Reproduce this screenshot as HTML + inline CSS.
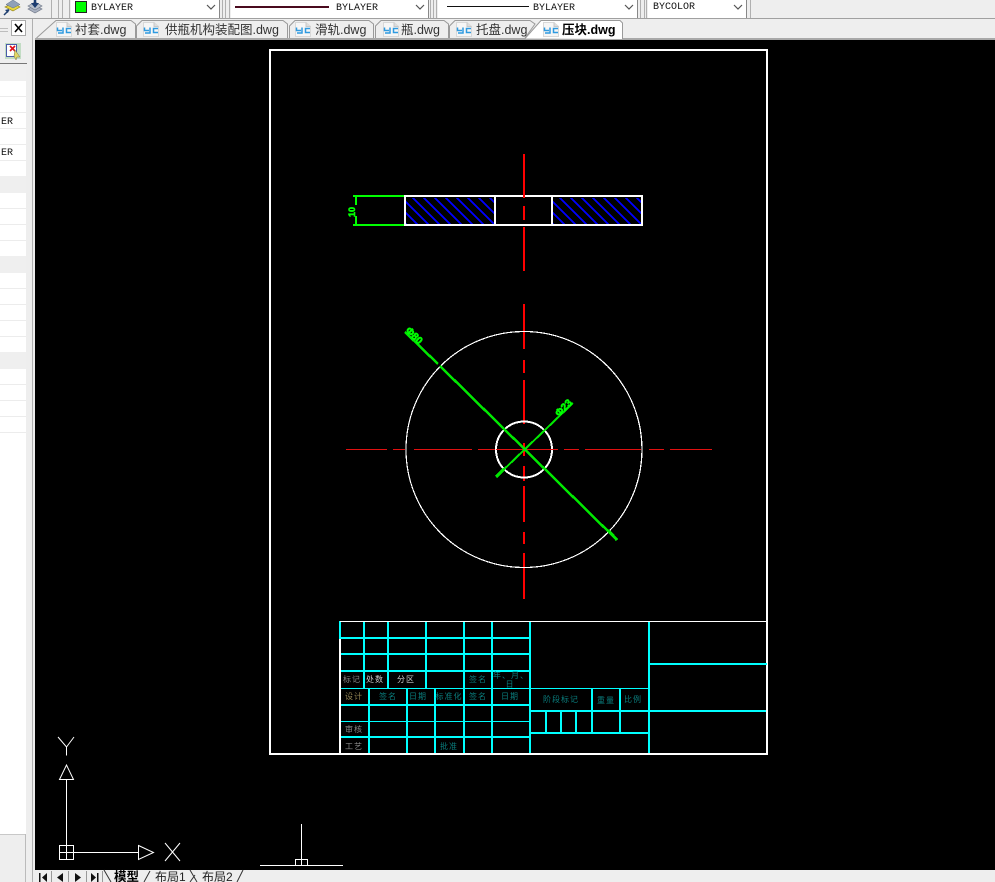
<!DOCTYPE html>
<html><head><meta charset="utf-8"><style>
html,body{margin:0;padding:0;width:995px;height:882px;overflow:hidden;background:#000}
svg{display:block;position:absolute;left:0;top:0}
.m{font-family:"Liberation Mono",monospace;font-size:10px;fill:#111}
.t{font-family:"Liberation Sans","WenQuanYi Zen Hei","Noto Sans CJK SC",sans-serif;font-size:12.5px;fill:#333}
.c{font-family:"Liberation Sans","Noto Sans CJK SC",sans-serif;font-size:8px;fill:#0a7d7d;text-anchor:middle;letter-spacing:1px}
</style></head><body>
<svg width="995" height="882" viewBox="0 0 995 882" xmlns="http://www.w3.org/2000/svg">
<defs>
<clipPath id="h1"><rect x="406" y="198" width="88" height="26"/></clipPath>
<clipPath id="h2"><rect x="553" y="198" width="88" height="26"/></clipPath>
<g id="yc"><path d="M0.500 1.500H11L15.500 5.500V15.500H0.500Z" fill="#f6f6f6" stroke="#d8d8d8"/><path d="M11 1.500V5.500H15.500" fill="#ddd" stroke="#c8c8c8"/><path d="M1.500 6.500V9.500H6M7 6.500V12H2M15 7.500H10.500V11.500H15" fill="none" stroke="#2f9ae0" stroke-width="1.500"/></g>
</defs>
<rect width="995" height="882" fill="#000"/>
<!-- toolbar -->
<rect x="0" y="0" width="995" height="40" fill="#eeeeee"/>
<rect x="0" y="18" width="995" height="1" fill="#a0a0a0"/>
<rect x="0" y="38" width="995" height="2" fill="#a8a8a8"/>
<!-- layer icons -->
<path d="M5 7L13 3L20 7L13 11Z" fill="#e7d640" stroke="#9a8a20" stroke-width=".7"/><path d="M6 4.500L13 0L20 4.500L13 8Z" fill="#8fa0b8" stroke="#607088" stroke-width=".5"/><path d="M4 15L9 10" stroke="#204070" stroke-width="1.500"/><path d="M9 9L5 10L8 13Z" fill="#204070"/>
<path d="M28 9L35 5L42 9L35 13Z" fill="#a8b0c0" stroke="#707888" stroke-width=".7"/><path d="M28 6L35 2L42 6L35 10Z" fill="#b8c0cc" stroke="#707888" stroke-width=".7"/><path d="M35 0V6" stroke="#1c3c70" stroke-width="2.500"/><path d="M31 3H39L35 8Z" fill="#1c3c70"/>
<g fill="none" stroke="#b0b0b0"><path d="M51.500 0V18M58.500 0V18M62.500 0V18M69.500 0V18"/><path d="M222.500 0V18M225.500 0V18M229.500 0V18"/><path d="M430.500 0V18M433.500 0V18M436.500 0V18"/><path d="M640.500 0V18M644.500 0V18M646.500 0V18"/><path d="M750.500 0V18"/></g>
<g shape-rendering="crispEdges">
<rect x="71" y="0" width="148" height="18" fill="#fff"/><rect x="219" y="0" width="1" height="18" fill="#888"/>
<rect x="231" y="0" width="197" height="18" fill="#fff"/><rect x="428" y="0" width="1" height="18" fill="#888"/>
<rect x="438" y="0" width="199" height="18" fill="#fff"/><rect x="637" y="0" width="1" height="18" fill="#888"/>
<rect x="648" y="0" width="98" height="18" fill="#fff"/><rect x="746" y="0" width="1" height="18" fill="#888"/>
<rect x="75.500" y="1.500" width="11" height="11" fill="#00ff00" stroke="#222" stroke-width="1"/>
<rect x="235" y="6" width="94" height="2" fill="#4a0a1e"/>
<rect x="447" y="6" width="82" height="1" fill="#111"/>
</g>
<text class="m" x="91" y="10">BYLAYER</text><text class="m" x="336" y="10">BYLAYER</text><text class="m" x="533" y="10">BYLAYER</text><text class="m" x="653" y="9">BYCOLOR</text>
<g fill="none" stroke="#555" stroke-width="1.200"><path d="M207 5L211 9L215 5M416 5L420 9L424 5M625 5L629 9L633 5M734 5L738 9L742 5"/></g>
<!-- tabs -->
<g fill="#eeeeee" stroke="#9a9a9a">
<path d="M36.500 38L56 20.500H131L135.500 24V38"/>
<path d="M136.500 38V26L142 20.500H283L287.500 24V38"/>
<path d="M289.500 38V26L295 20.500H369L373.500 24V38"/>
<path d="M375.500 38V26L381 20.500H444L448.500 24V38"/>
<path d="M449.500 38V26L455 20.500H530L535 24L525 38"/>
</g>
<path d="M525 38.500L541 20.500H620L622.500 23V39" fill="#fff" stroke="#9a9a9a"/>
<use href="#yc" x="56" y="21"/><use href="#yc" x="143" y="21"/><use href="#yc" x="295" y="21"/><use href="#yc" x="383" y="21"/><use href="#yc" x="456" y="21"/><use href="#yc" x="543" y="21"/>
<text class="t" x="75" y="34">衬套.dwg</text><text class="t" x="165" y="34">供瓶机构装配图.dwg</text><text class="t" x="315" y="34">滑轨.dwg</text><text class="t" x="401" y="34">瓶.dwg</text><text class="t" x="476" y="34">托盘.dwg</text><text class="t" x="562" y="34" style="font-weight:bold;fill:#000">压块.dwg</text>
<!-- left panel -->
<rect x="0" y="19" width="35" height="863" fill="#eeeeee"/>
<rect x="32" y="19" width="1" height="863" fill="#b0b0b0"/>
<rect x="0" y="64" width="26" height="770" fill="#fff"/>
<rect x="0" y="834" width="26" height="48" fill="#eeeeee"/>
<rect x="0" y="834" width="25" height="1" fill="#c8c8c8"/><rect x="25" y="834" width="1" height="48" fill="#bbb"/>
<rect x="0" y="63" width="27" height="1" fill="#777"/>
<rect x="0" y="28" width="8" height="1" fill="#bdbdbd"/><rect x="0" y="31" width="8" height="1" fill="#bdbdbd"/>
<rect x="11.500" y="20.500" width="14" height="15" fill="#fff" stroke="#aaa"/>
<path d="M15 24L22 32M22 24L15 32" stroke="#000" stroke-width="1.600"/>
<rect x="5" y="43" width="16" height="16" fill="#c2dcc4"/>
<rect x="6.500" y="44.500" width="10" height="12" fill="#fff" stroke="#4a5aa8"/>
<path d="M10 46L15 51M15 46L10 51" stroke="#e0101a" stroke-width="1.600"/>
<path d="M15 50L20 57L17 57L16 60L14 56Z" fill="#e2d868" stroke="#807840" stroke-width=".5"/>
<g fill="#efefef"><rect x="0" y="64" width="26" height="17"/><rect x="0" y="176" width="26" height="17"/><rect x="0" y="256" width="26" height="17"/><rect x="0" y="352" width="26" height="17"/></g>
<g fill="#ececec"><rect x="0" y="96" width="26" height="1"/><rect x="0" y="112" width="26" height="1"/><rect x="0" y="128" width="26" height="1"/><rect x="0" y="144" width="26" height="1"/><rect x="0" y="160" width="26" height="1"/><rect x="0" y="208" width="26" height="1"/><rect x="0" y="224" width="26" height="1"/><rect x="0" y="240" width="26" height="1"/><rect x="0" y="288" width="26" height="1"/><rect x="0" y="304" width="26" height="1"/><rect x="0" y="320" width="26" height="1"/><rect x="0" y="336" width="26" height="1"/><rect x="0" y="384" width="26" height="1"/><rect x="0" y="400" width="26" height="1"/><rect x="0" y="416" width="26" height="1"/><rect x="0" y="432" width="26" height="1"/></g>
<text class="m" x="1" y="124">ER</text><text class="m" x="1" y="155">ER</text>
<!-- frame -->
<rect x="270" y="50" width="497" height="704" fill="none" stroke="#fff" stroke-width="2" shape-rendering="crispEdges"/>
<!-- top view hatch -->
<g clip-path="url(#h1)" stroke="#0000ff" stroke-width="2" fill="none" shape-rendering="crispEdges"><path d="M364 182L424 242M375 182L435 242M386 182L446 242M397 182L457 242M408 182L468 242M419 182L479 242M430 182L490 242M441 182L501 242M452 182L512 242M463 182L523 242M474 182L534 242"/></g>
<g clip-path="url(#h2)" stroke="#0000ff" stroke-width="2" fill="none" shape-rendering="crispEdges"><path d="M511 182L571 242M522 182L582 242M533 182L593 242M544 182L604 242M555 182L615 242M566 182L626 242M577 182L637 242M588 182L648 242M599 182L659 242M610 182L670 242M621 182L681 242"/></g>
<g shape-rendering="crispEdges">
<rect x="405" y="196" width="237" height="29" fill="none" stroke="#fff" stroke-width="2"/>
<rect x="494" y="196" width="2" height="29" fill="#fff"/><rect x="551" y="196" width="2" height="29" fill="#fff"/>
<rect x="353" y="195" width="51" height="2" fill="#00ff00"/><rect x="353" y="224" width="51" height="2" fill="#00ff00"/>
<rect x="355" y="196" width="2" height="9" fill="#00ff00"/><rect x="355" y="216" width="2" height="10" fill="#00ff00"/>
</g>
<text transform="translate(355,217) rotate(-90)" font-family="Liberation Sans,sans-serif" font-weight="bold" font-size="9" fill="#00ff00" stroke="#00ff00" stroke-width=".6">10</text>
<!-- centre lines red vertical -->
<g fill="#ff0000" shape-rendering="crispEdges">
<rect x="523" y="154" width="2" height="44"/><rect x="523" y="206" width="2" height="14"/><rect x="523" y="227" width="2" height="44"/>
<rect x="523" y="304" width="2" height="45"/><rect x="523" y="360" width="2" height="13"/><rect x="523" y="380" width="2" height="44"/><rect x="523" y="443" width="2" height="13"/><rect x="523" y="466" width="2" height="15"/><rect x="523" y="486" width="2" height="36"/><rect x="523" y="532" width="2" height="12"/><rect x="523" y="553" width="2" height="46"/>
</g>
<!-- circles -->
<circle cx="524" cy="449.500" r="118" fill="none" stroke="#fff" stroke-width="1.200" shape-rendering="crispEdges"/>
<circle cx="524" cy="449.500" r="28" fill="none" stroke="#fff" stroke-width="2" shape-rendering="crispEdges"/>
<g fill="#e01010" shape-rendering="crispEdges">
<rect x="346" y="449" width="41" height="1"/><rect x="393" y="449" width="12" height="1"/><rect x="414" y="449" width="58" height="1"/><rect x="478" y="449" width="17" height="1"/><rect x="496" y="449" width="62" height="1"/><rect x="564" y="449" width="15" height="1"/><rect x="585" y="449" width="56" height="1"/><rect x="649" y="449" width="15" height="1"/><rect x="670" y="449" width="42" height="1"/>
</g>
<!-- green dims -->
<g stroke="#00e600" fill="none" shape-rendering="crispEdges"><path d="M405 332L438 364M440 366L617 540" stroke-width="2.500"/><path d="M496 477L573 403" stroke-width="2"/><path d="M608 530L617 540M496 477L504 469" stroke-width="3"/></g>
<text transform="translate(405,331) rotate(45)" font-family="Liberation Sans,sans-serif" font-weight="bold" font-size="10" fill="#00ff00" stroke="#00ff00" stroke-width=".7">Φ80</text>
<text transform="translate(559,417) rotate(-45)" font-family="Liberation Sans,sans-serif" font-weight="bold" font-size="10" fill="#00ff00" stroke="#00ff00" stroke-width=".7">Φ23</text>
<!-- title block -->
<g fill="#00ffff" shape-rendering="crispEdges">
<rect x="339" y="621" width="2" height="18"/>
<rect x="340" y="637" width="190" height="2"/><rect x="340" y="653" width="190" height="2"/><rect x="340" y="670" width="190" height="2"/>
<rect x="340" y="688" width="309" height="1"/><rect x="340" y="704" width="190" height="2"/><rect x="340" y="721" width="190" height="1"/><rect x="340" y="736" width="190" height="2"/>
<rect x="363" y="621" width="2" height="67"/><rect x="387" y="621" width="2" height="67"/><rect x="425" y="621" width="2" height="67"/><rect x="463" y="621" width="2" height="132"/><rect x="491" y="621" width="2" height="132"/><rect x="529" y="621" width="2" height="132"/>
<rect x="368" y="688" width="2" height="65"/><rect x="406" y="688" width="2" height="65"/><rect x="434" y="688" width="2" height="65"/>
<rect x="648" y="621" width="2" height="132"/><rect x="591" y="688" width="2" height="45"/><rect x="619" y="688" width="2" height="45"/>
<rect x="649" y="663" width="118" height="2"/><rect x="530" y="710" width="236" height="2"/><rect x="530" y="732" width="119" height="2"/>
<rect x="545" y="711" width="2" height="22"/><rect x="560" y="711" width="2" height="22"/><rect x="575" y="711" width="2" height="22"/>
<rect x="340" y="621" width="427" height="1" fill="#fff"/>
<rect x="339" y="639" width="2" height="114" fill="#fff"/>
</g>
<text class="c" x="352" y="682" style="fill:#888">标记</text><text class="c" x="375" y="682" style="fill:#ccc">处数</text><text class="c" x="406" y="682" style="fill:#ccc">分区</text><text class="c" x="478" y="682">签名</text><text class="c" x="511" y="678">年、月、</text><text class="c" x="510" y="687">日</text>
<text class="c" x="354" y="699" style="fill:#948654">设计</text><text class="c" x="388" y="699">签名</text><text class="c" x="418" y="699">日期</text><text class="c" x="449" y="699">标准化</text><text class="c" x="478" y="699">签名</text><text class="c" x="510" y="699">日期</text>
<text class="c" x="354" y="732" style="fill:#888">审核</text><text class="c" x="354" y="749" style="fill:#888">工艺</text><text class="c" x="449" y="749">批准</text>
<text class="c" x="561" y="702">阶段标记</text><text class="c" x="606" y="703">重量</text><text class="c" x="633" y="702">比例</text>
<!-- UCS -->
<g fill="none" stroke="#fff" stroke-width="1" shape-rendering="crispEdges">
<path d="M66.500 780V845"/><rect x="59.500" y="845.500" width="14" height="14"/><path d="M66.500 845V860M59 852.500H74M74 852.500H138"/>
</g>
<g fill="none" stroke="#fff" stroke-width="1">
<path d="M59.500 779.500L66.500 765L73.500 779.500Z"/><path d="M138.500 845.500L153.500 852.500L138.500 859.500Z"/>
<path d="M58 737L66.500 747L74 737M66.500 747V755.500"/><path d="M165 843L180 861M180 843L165 861"/>
</g>
<g fill="none" stroke="#fff" stroke-width="1" shape-rendering="crispEdges">
<path d="M301.500 824V865M260 865.500H343"/><rect x="295.500" y="859.500" width="12" height="6"/>
</g>
<!-- bottom tabs -->
<rect x="35" y="870" width="960" height="12" fill="#eeeeee"/>
<g fill="none" stroke="#999"><path d="M51.500 871V882M68.500 871V882M86.500 871V882M102.500 871V882"/></g>
<g fill="#111"><rect x="39" y="873" width="1.500" height="9"/><path d="M47 873V882L42 877.500Z"/><path d="M63 873V882L57 877.500Z"/><path d="M75 873V882L81 877.500Z"/><path d="M91 873V882L96 877.500Z"/><rect x="97" y="873" width="1.500" height="9"/></g>
<path d="M104 870L111 882M144 882L150 871M190 870L197 882M237 882L243 870M190 882L195 875" fill="none" stroke="#333"/>
<text x="114" y="881" font-family="Liberation Sans,'Noto Sans CJK SC',sans-serif" font-size="12.500" font-weight="bold" fill="#000">模型</text>
<text x="155" y="881" font-family="Liberation Sans,'WenQuanYi Zen Hei','Noto Sans CJK SC',sans-serif" font-size="12" fill="#222">布局1</text>
<text x="202" y="881" font-family="Liberation Sans,'WenQuanYi Zen Hei','Noto Sans CJK SC',sans-serif" font-size="12" fill="#222">布局2</text>
</svg>
</body></html>
